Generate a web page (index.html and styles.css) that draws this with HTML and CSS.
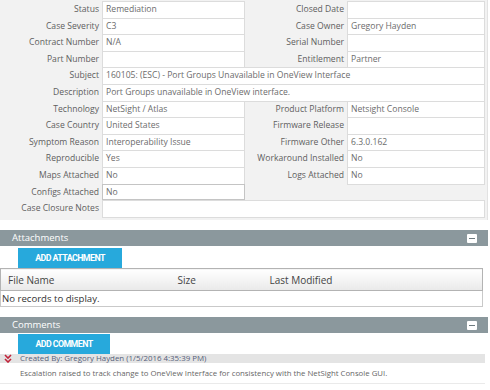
FILE: index.html
```html
<!DOCTYPE html>
<html>
<head>
<meta charset="utf-8">
<link rel="stylesheet" href="styles.css">
</head>
<body>
<div class="form">
  <div class="lbl">Status</div><div class="val">Remediation</div>
  <div class="lbl">Closed Date</div><div class="val"></div>

  <div class="lbl">Case Severity</div><div class="val">C3</div>
  <div class="lbl">Case Owner</div><div class="val">Gregory Hayden</div>

  <div class="lbl">Contract Number</div><div class="val">N/A</div>
  <div class="lbl">Serial Number</div><div class="val"></div>

  <div class="lbl">Part Number</div><div class="val"></div>
  <div class="lbl">Entitlement</div><div class="val">Partner</div>

  <div class="lbl">Subject</div><div class="val wide">160105: (ESC) - Port Groups Unavailable in OneView Interface</div>

  <div class="lbl">Description</div><div class="val wide">Port Groups unavailable in OneView interface.</div>

  <div class="lbl">Technology</div><div class="val">NetSight / Atlas</div>
  <div class="lbl">Product Platform</div><div class="val">Netsight Console</div>

  <div class="lbl">Case Country</div><div class="val">United States</div>
  <div class="lbl">Firmware Release</div><div class="val"></div>

  <div class="lbl">Symptom Reason</div><div class="val">Interoperability Issue</div>
  <div class="lbl">Firmware Other</div><div class="val">6.3.0.162</div>

  <div class="lbl">Reproducible</div><div class="val">Yes</div>
  <div class="lbl">Workaround Installed</div><div class="val">No</div>

  <div class="lbl">Maps Attached</div><div class="val">No</div>
  <div class="lbl">Logs Attached</div><div class="val">No</div>

  <div class="lbl">Configs Attached</div><div class="val input">No</div>
  <div class="lbl"></div><div class="blank"></div>

  <div class="lbl">Case Closure Notes</div><div class="val wide last"></div>
</div>

<div class="section">
  <div class="bar"><span class="bar-title">Attachments</span><span class="minus"></span></div>
  <button class="btn btn-att">ADD ATTACHMENT</button>
  <table class="grid">
    <thead>
      <tr><th class="c1">File Name</th><th class="c2">Size</th><th class="c3">Last Modified</th></tr>
    </thead>
    <tbody>
      <tr><td colspan="3" class="empty">No records to display.</td></tr>
    </tbody>
  </table>
</div>

<div class="section comments">
  <div class="bar"><span class="bar-title">Comments</span><span class="minus"></span></div>
  <button class="btn btn-com">ADD COMMENT</button>
  <div class="comment">
    <div class="c-head">
      <svg class="chev" width="8" height="9" viewBox="0 0 8 9"><path d="M1 1 L4 4 L7 1 M1 5 L4 8 L7 5" fill="none" stroke="#c0243a" stroke-width="1.6"/></svg>
      <span>Created By: Gregory Hayden (1/5/2016 4:35:39 PM)</span>
    </div>
    <div class="c-body">Escalation raised to track change to OneView Interface for consistency with the NetSight Console GUI.</div>
  </div>
</div>
</body>
</html>
```

FILE: styles.css
```css
* { box-sizing: border-box; }
html, body { margin: 0; padding: 0; }
body {
  width: 490px;
  height: 390px;
  overflow: hidden;
  background: #ffffff;
  font-family: "Open Sans", "Noto Sans", sans-serif;
  color: #555;
}
.form {
  display: grid;
  grid-template-columns: 102px 143px 102px 138px;
  grid-auto-rows: 16.6px;
  padding-top: 1px;
  width: 488px;
  height: 220px;
  background: #f2f2f2;
  border-right: 1px solid #e2e2e2;
}
.lbl {
  text-align: right;
  padding-right: 3px;
  font-size: 8.6px;
  line-height: 16.6px;
  color: #5e5e5e;
  white-space: nowrap;
}
.val {
  background: #fff;
  border: 1px solid #dcdcdc;
  height: 17.6px;
  padding-left: 3px;
  font-size: 8.6px;
  line-height: 15.4px;
  color: #6c6c6c;
  white-space: nowrap;
  overflow: hidden;
}
.val.wide { grid-column: 2 / 5; }
.val.input { border-color: #c4c4c4; height: 16.6px; }
.blank { grid-column: 4 / 5; }
.section {
  background: #fff;
  padding-top: 10px;
  width: 488px;
}
.bar {
  height: 16px;
  background: #8b989d;
  display: flex;
  align-items: center;
  justify-content: space-between;
  padding: 0 11px 0 12px;
}
.bar-title {
  color: #fff;
  font-size: 9.5px;
  line-height: 16px;
}
.minus {
  width: 10px;
  height: 9px;
  background: #fff;
  border-radius: 1px;
  position: relative;
}
.minus::after {
  content: "";
  position: absolute;
  left: 2px;
  right: 2px;
  top: 4px;
  height: 1.5px;
  background: #6d7a7f;
}
.btn {
  display: block;
  margin: 2px 0 0 18px;
  height: 20px;
  padding: 0;
  border: none;
  background: #27a9dc;
  color: #fff;
  font-family: Roboto, "Liberation Sans", sans-serif;
  font-weight: bold;
  font-size: 8.8px;
  letter-spacing: -0.55px;
  text-align: center;
}
.btn-att { width: 104px; }
.btn-com { width: 92px; margin-top: 1px; }
.grid {
  border-collapse: collapse;
  width: 483px;
  margin-top: 0;
}
.grid th {
  height: 22px;
  padding: 0 0 0 7px;
  text-align: left;
  font-weight: normal;
  font-size: 10px;
  color: #444;
  background: linear-gradient(#ffffff, #e9e9e9);
  border-top: 1px solid #b3b3b3;
  border-bottom: 1px solid #b3b3b3;
}
.grid th.c1 { width: 170px; border-left: 1px solid #b3b3b3; }
.grid th.c2 { width: 92px; }
.grid th.c3 { border-right: 1px solid #b3b3b3; }
.grid td.empty {
  height: 16px;
  padding: 0 0 0 1px;
  font-size: 9.6px;
  color: #333;
  border: 1px solid #c9c9c9;
  border-top: none;
}
.comments { padding-top: 10px; }
.comment {
  width: 485px;
  border-bottom: 1px solid #eaeaea;
  padding-bottom: 4px;
}
.c-head {
  height: 9px;
  background: #e4e4e4;
  display: flex;
  align-items: center;
  gap: 8px;
  padding-left: 4px;
  font-size: 7.9px;
  line-height: 9px;
  color: #55607a;
  white-space: nowrap;
}
.chev { flex: none; }
.c-body {
  padding: 4px 0 0 20px;
  font-size: 7.8px;
  line-height: 12px;
  color: #666;
  white-space: nowrap;
}
```
